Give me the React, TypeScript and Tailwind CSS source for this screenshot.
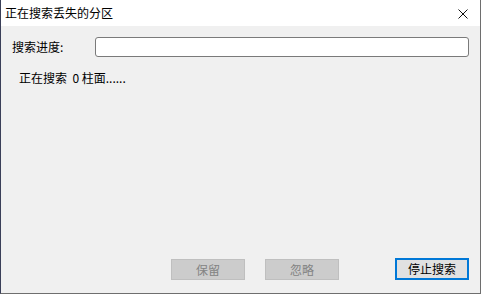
const font = {
    fontFamily: '"Microsoft YaHei UI", "Noto Sans CJK SC", "Noto Sans", sans-serif',
};

const Button = ({
    label,
    disabled,
    primary,
}: {
    label: string;
    disabled?: boolean;
    primary?: boolean;
}) => (
    <button
        className={
            primary
                ? "flex h-[22px] w-[74px] items-center justify-center border-2 border-[#0078d7] bg-[#e1e1e1] text-[12px] text-black"
                : disabled
                  ? "flex h-[21px] w-[74px] items-center justify-center border border-[#bfbfbf] bg-[#cccccc] text-[12px] text-[#838383]"
                  : "flex h-[21px] w-[74px] items-center justify-center border border-[#adadad] bg-[#e1e1e1] text-[12px] text-black"
        }
        disabled={disabled}
    >
        {label}
    </button>
);

export default function App() {
    return (
        <div
            className="flex h-[294px] w-[481px] flex-col border-r border-b border-l border-[#6e6e6e] border-l-[#3a3f58] bg-[#f0f0f0]"
            style={font}
        >
            <div className="flex h-[26px] items-center justify-between bg-white pr-[12px] pl-[4px]">
                <span className="text-[12px] text-black">正在搜索丢失的分区</span>
                <svg width="10" height="10" viewBox="0 0 10 10" className="mt-[1px]">
                    <path d="M0.5 0.5 L9.5 9.5 M9.5 0.5 L0.5 9.5" stroke="#111" strokeWidth="1" />
                </svg>
            </div>

            <div className="flex flex-1 flex-col pt-[11px] pr-[11px] pb-[13px] pl-[11px]">
                <div className="flex items-center">
                    <span className="w-[83px] text-[12px] text-black">搜索进度:</span>
                    <div className="h-[20px] flex-1 rounded-[3px] border border-[#7a7a7a] bg-white" />
                </div>

                <div className="mt-[12px] pl-[7px] text-[12px] text-black">
                    正在搜索&nbsp;&nbsp;0 柱面......
                </div>

                <div className="mt-auto flex items-end">
                    <div className="ml-[159px]">
                        <Button label="保留" disabled />
                    </div>
                    <div className="ml-[20px]">
                        <Button label="忽略" disabled />
                    </div>
                    <div className="ml-[56px]">
                        <Button label="停止搜索" primary />
                    </div>
                </div>
            </div>
        </div>
    );
}
